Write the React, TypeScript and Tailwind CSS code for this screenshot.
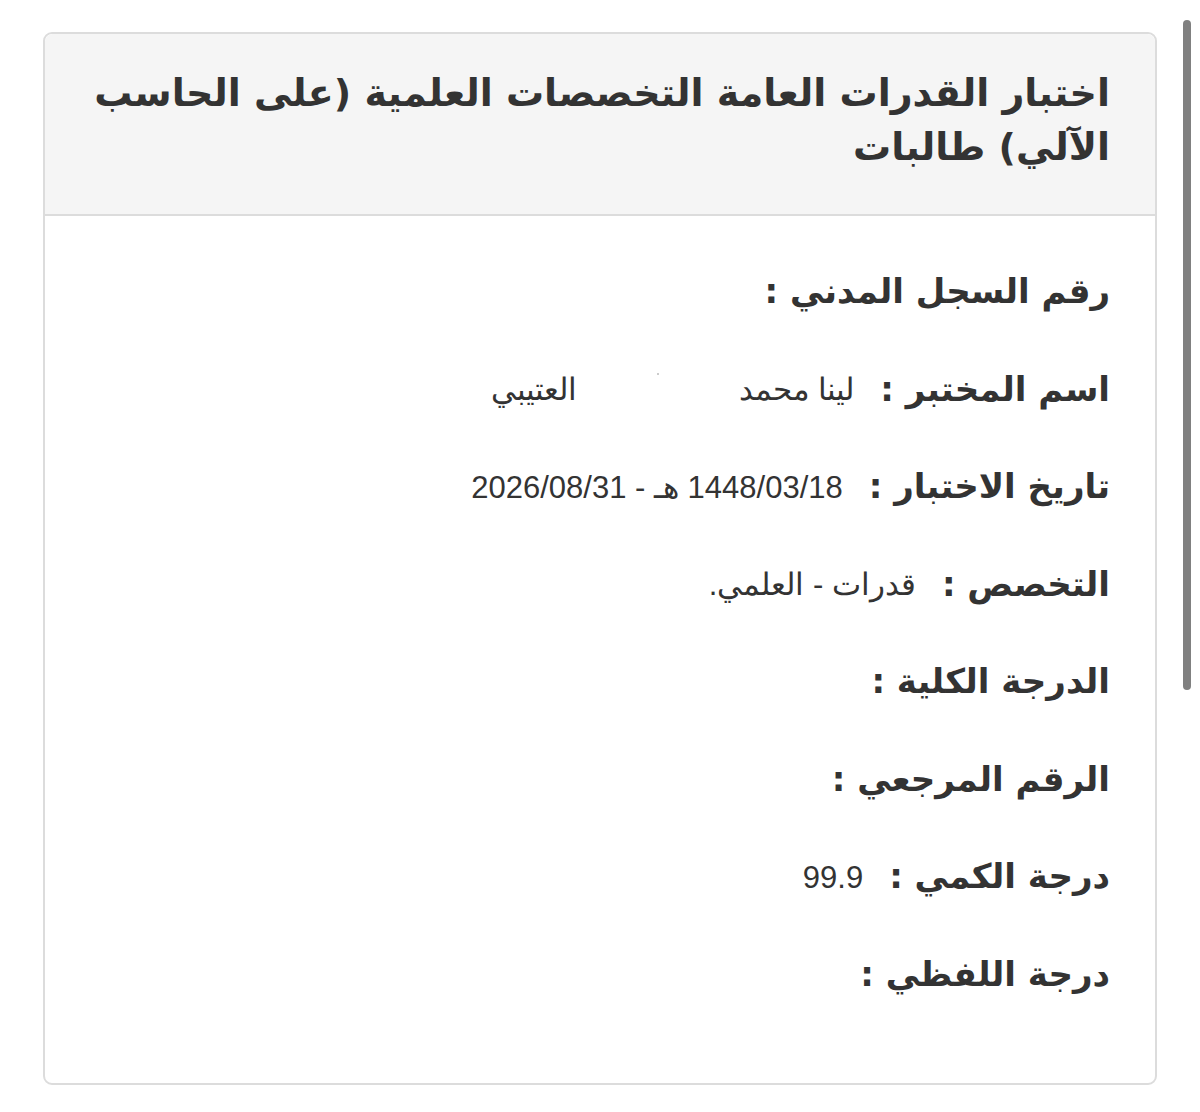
const rows: { label: string; value?: string; gap?: boolean }[] = [
  { label: 'رقم السجل المدني :' },
  { label: 'اسم المختبر :', value: 'لينا محمد', gap: true },
  { label: 'تاريخ الاختبار :', value: '1448/03/18 هـ - 2026/08/31' },
  { label: 'التخصص :', value: 'قدرات - العلمي.' },
  { label: 'الدرجة الكلية :' },
  { label: 'الرقم المرجعي :' },
  { label: 'درجة الكمي :', value: '99.9' },
  { label: 'درجة اللفظي :' },
];

export default function App() {
  return (
    <div className="relative h-[1112px] bg-white pt-[32px] px-[43px] overflow-hidden">
      <div
        dir="rtl"
        className="w-[1114px] rounded-[9px] border-2 border-[#dcdcdc] bg-white text-[#333] font-['DejaVu_Sans',sans-serif]"
      >
        <div className="rounded-t-[8px] bg-[#f5f5f5] border-b-2 border-[#dcdcdc] h-[182px] pr-[45px] pl-[40px] pt-[32px]">
          <h1 className="text-[38px] font-bold leading-[54px]">
            اختبار القدرات العامة التخصصات العلمية (على الحاسب الآلي) طالبات
          </h1>
        </div>
        <div className="pr-[45px] pt-[27px] pb-[60px]">
          {rows.map((r) => (
            <div key={r.label} className="h-[97.5px] flex items-center">
              <span className="text-[34px] font-bold">{r.label}</span>
              {r.value && (
                <span className="mr-[26px] mt-[2px] text-[31px] font-['Liberation_Sans','DejaVu_Sans',sans-serif] font-extralight whitespace-pre">
                  {r.value}
                  {r.gap && (
                    <span className="inline-flex w-[162px] justify-center align-top">
                      <span className="mt-[6px] w-[2px] h-[2px] rounded-full bg-[#bbb]" />
                    </span>
                  )}
                  {r.gap && 'العتيبي'}
                </span>
              )}
            </div>
          ))}
        </div>
      </div>
      <div className="absolute left-[1183px] top-[20px] w-[8px] h-[670px] rounded-full bg-[#808080]" />
    </div>
  );
}
